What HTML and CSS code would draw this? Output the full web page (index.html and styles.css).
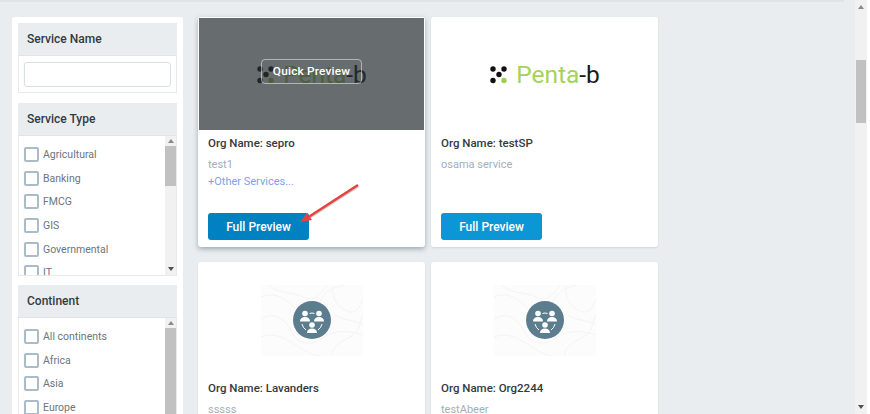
FILE: index.html
```html
<!DOCTYPE html>
<html lang="en">
<head>
    <meta charset="UTF-8">
    <title>Service Catalog</title>
    <link rel="stylesheet" href="styles.css">
</head>
<body>
    <svg class="defs">
        <symbol id="org-icon" viewBox="0 0 102 71">
            <rect width="102" height="71" fill="#fcfcfc"/>
            <g fill="none" stroke="#f3f3f3" stroke-width="1">
                <path d="M0 12C14 6 26 14 36 26S52 30 58 18 72 2 84 0"/>
                <path d="M8 0C18 10 30 6 42 12S60 8 66 0"/>
                <path d="M0 34C14 26 24 34 30 46S48 62 60 54 82 44 102 50"/>
                <path d="M0 52C16 46 28 56 38 62S52 71 60 71"/>
                <path d="M70 71C72 58 84 56 92 50S98 36 102 30"/>
                <path d="M72 0C70 12 76 22 86 26S98 22 102 14"/>
                <path d="M74 30C82 36 92 34 102 40"/>
            </g>
            <circle cx="51" cy="35" r="19" fill="#5b7d8e"/>
            <g fill="#fff">
                <circle cx="44" cy="28.5" r="2.8"/>
                <path d="M39 36.5c0-3 2-4.5 5-4.5s5 1.5 5 4.5z"/>
                <circle cx="58" cy="28.5" r="2.8"/>
                <path d="M53 36.500c0-3 2-4.500 5-4.500s5 1.500 5 4.500z"/>
                <circle cx="51" cy="40" r="2.800"/>
                <path d="M46 48c0-3 2-4.500 5-4.500s5 1.500 5 4.500z"/>
            </g>
            <g fill="none" stroke="#fff" stroke-width="1">
                <path d="M48.500 28.500q2.500-1 5 0"/>
                <path d="M41 39q1 4 4 6"/>
                <path d="M61 39q-1 4-4 6"/>
            </g>
        </symbol>
        <symbol id="penta-dots" viewBox="0 0 17 18">
            <circle cx="3" cy="3" r="2.700" fill="#111"/>
            <circle cx="14" cy="3" r="2.700" fill="#111"/>
            <circle cx="9" cy="8.500" r="2.700" fill="#111"/>
            <circle cx="3" cy="14.500" r="2.700" fill="#111"/>
            <circle cx="14" cy="14.500" r="2.700" fill="#9ccf4f"/>
        </symbol>
    </svg>

    <div class="page">
        <div class="content">
            <div class="top-line"></div>
            <div class="layout">
                <!-- Filters -->
                <aside class="filters">
                    <section>
                        <h3 class="filter-title">Service Name</h3>
                        <div class="filter-box name-box">
                            <input type="text" class="name-input">
                        </div>
                    </section>

                    <section>
                        <h3 class="filter-title">Service Type</h3>
                        <div class="filter-box list-box">
                            <ul class="check-list">
                                <li><span class="check"></span>Agricultural</li>
                                <li><span class="check"></span>Banking</li>
                                <li><span class="check"></span>FMCG</li>
                                <li><span class="check"></span>GIS</li>
                                <li><span class="check"></span>Governmental</li>
                                <li><span class="check"></span>IT</li>
                            </ul>
                            <div class="mini-scroll">
                                <span class="arrow-up"></span>
                                <div class="mini-track">
                                    <div class="mini-thumb type-thumb"></div>
                                </div>
                                <span class="arrow-down"></span>
                            </div>
                        </div>
                    </section>

                    <section>
                        <h3 class="filter-title">Continent</h3>
                        <div class="filter-box list-box">
                            <ul class="check-list">
                                <li><span class="check"></span>All continents</li>
                                <li><span class="check"></span>Africa</li>
                                <li><span class="check"></span>Asia</li>
                                <li><span class="check"></span>Europe</li>
                            </ul>
                            <div class="mini-scroll">
                                <span class="arrow-up"></span>
                                <div class="mini-track">
                                    <div class="mini-thumb continent-thumb"></div>
                                </div>
                                <span class="arrow-down"></span>
                            </div>
                        </div>
                    </section>
                </aside>

                <!-- Organisation cards -->
                <main class="cards">
                    <article class="card card-hover">
                        <div class="card-image">
                            <div class="penta-logo">
                                <svg class="penta-dots"><use href="#penta-dots"/></svg>
                                <span class="penta-name">Penta<span class="penta-b">-b</span></span>
                            </div>
                            <div class="image-overlay">
                                <span class="quick-btn">Quick Preview</span>
                            </div>
                        </div>
                        <div class="card-body">
                            <h4 class="org-name">Org Name: sepro</h4>
                            <p class="org-service">test1</p>
                            <a class="org-more">+Other Services...</a>
                            <button class="full-btn">Full Preview</button>
                        </div>
                    </article>

                    <article class="card">
                        <div class="card-image">
                            <div class="penta-logo">
                                <svg class="penta-dots"><use href="#penta-dots"/></svg>
                                <span class="penta-name">Penta<span class="penta-b">-b</span></span>
                            </div>
                        </div>
                        <div class="card-body">
                            <h4 class="org-name">Org Name: testSP</h4>
                            <p class="org-service">osama service</p>
                            <a class="org-more"></a>
                            <button class="full-btn">Full Preview</button>
                        </div>
                    </article>

                    <article class="card">
                        <div class="card-image">
                            <svg class="org-icon"><use href="#org-icon"/></svg>
                        </div>
                        <div class="card-body">
                            <h4 class="org-name">Org Name: Lavanders</h4>
                            <p class="org-service">sssss</p>
                        </div>
                    </article>

                    <article class="card">
                        <div class="card-image">
                            <svg class="org-icon"><use href="#org-icon"/></svg>
                        </div>
                        <div class="card-body">
                            <h4 class="org-name">Org Name: Org2244</h4>
                            <p class="org-service">testAbeer</p>
                        </div>
                    </article>

                    <!-- Arrow drawn on the screenshot -->
                    <svg class="note-arrow" viewBox="0 0 70 50">
                        <path class="note-shadow" d="M66 3L15 36"/>
                        <path class="note-line" d="M66 2L15 35"/>
                        <path class="note-head" d="M8 39L15 30L20 37z"/>
                    </svg>
                </main>
            </div>
        </div>

        <!-- Page scrollbar -->
        <div class="page-scroll">
            <span class="arrow-up"></span>
            <div class="page-track">
                <div class="page-thumb"></div>
            </div>
            <span class="arrow-down"></span>
        </div>
    </div>
</body>
</html>
```

FILE: styles.css
```css
* {
    box-sizing: border-box;
}
html, body {
    margin: 0;
    height: 100%;
    overflow: hidden;
}
body {
    font-family: Roboto, "Liberation Sans", sans-serif;
    background: #fff;
}
.defs {
    width: 0;
    height: 0;
    display: block;
}
.page {
    display: flex;
    width: 867px;
    height: 414px;
    overflow: hidden;
    background: #e9edf0;
}
.content {
    flex: 1;
    min-width: 0;
}
.top-line {
    width: 844px;
    height: 2px;
    background: #dde3e9;
}
.layout {
    display: flex;
    align-items: flex-start;
    gap: 15px;
    padding: 15px 0 0 12px;
}

/* filters */
.filters {
    width: 171px;
    flex: none;
    padding: 6px;
    background: #fff;
    border-radius: 3px;
}
.filter-title {
    height: 32px;
    margin: 0;
    padding-left: 9px;
    font-size: 12px;
    font-weight: 500;
    line-height: 32px;
    color: #343a40;
    background: #e9edf0;
}
.filter-box {
    border: 1px solid #e6eaed;
    border-top-color: #dfe4e8;
}
.name-box {
    height: 38px;
    padding: 6px 5px;
    margin-bottom: 10px;
}
.name-input {
    display: block;
    width: 147px;
    height: 25px;
    border: 1px solid #d9e0e4;
    border-radius: 3px;
    background: #fff;
}
.list-box {
    display: flex;
    height: 141px;
    margin-bottom: 9px;
    overflow: hidden;
}
.check-list {
    flex: 1;
    margin: 0;
    padding: 6px 0 0 5px;
    list-style: none;
    overflow: hidden;
}
.check-list li {
    display: flex;
    align-items: center;
    gap: 4px;
    height: 23.700px;
    padding-top: 1px;
    font-size: 10.500px;
    color: #6c757d;
    white-space: nowrap;
}
.check {
    width: 15px;
    height: 15px;
    flex: none;
    border: 2px solid #a9bcc8;
    border-radius: 2px;
    background: #fff;
}
.mini-scroll {
    display: flex;
    flex-direction: column;
    align-items: center;
    width: 11px;
    flex: none;
    background: #f1f1f1;
}
.mini-scroll .arrow-up {
    margin: 3px 0 3px;
}
.mini-scroll .arrow-down {
    margin: 3px 0 4px;
}
.mini-track {
    flex: 1;
    width: 100%;
}
.mini-thumb {
    width: 100%;
    background: #c1c1c1;
}
.type-thumb {
    height: 40px;
}
.continent-thumb {
    height: 100%;
}
.arrow-up, .arrow-down {
    width: 0;
    height: 0;
    flex: none;
    border-left: 3px solid transparent;
    border-right: 3px solid transparent;
}
.arrow-up {
    border-bottom: 4px solid #8a8a8a;
}
.arrow-down {
    border-top: 4px solid #505050;
}

/* cards */
.cards {
    position: relative;
    display: grid;
    grid-template-columns: 227px 227px;
    column-gap: 6px;
    row-gap: 15px;
    align-content: start;
}
.card {
    height: 230px;
    background: #fff;
    border-radius: 3px;
    box-shadow: 0 1px 2px rgba(90, 110, 125, 0.18);
}
.card-hover {
    box-shadow: 0 2px 5px rgba(80, 100, 115, 0.5);
}
.card-image {
    position: relative;
    display: flex;
    align-items: center;
    justify-content: center;
    height: 113px;
    overflow: hidden;
    border-radius: 3px 3px 0 0;
}
.image-overlay {
    position: absolute;
    inset: 1px 1px 0 1px;
    display: flex;
    align-items: center;
    justify-content: center;
    background: rgba(38, 46, 49, 0.7);
}
.quick-btn {
    width: 101px;
    height: 25px;
    margin-top: -6px;
    border: 1px solid rgba(255, 255, 255, 0.5);
    border-radius: 4px;
    font-size: 11.800px;
    font-weight: 500;
    line-height: 22px;
    letter-spacing: 0.2px;
    text-align: center;
    color: #fff;
}
.penta-logo {
    display: flex;
    align-items: center;
    gap: 9px;
    margin: 2px 0 0 1px;
}
.penta-dots {
    width: 17px;
    height: 18px;
}
.penta-name {
    font-size: 24.500px;
    font-weight: 400;
    line-height: 26px;
    color: #a5d25a;
}
.penta-b {
    color: #1b1b1b;
}
.org-icon {
    width: 102px;
    height: 71px;
    margin-top: 3px;
}
.card-body {
    display: flex;
    flex-direction: column;
    align-items: flex-start;
    padding: 5px 10px 0;
}
.org-name {
    margin: 0;
    font-size: 11.500px;
    font-weight: 500;
    line-height: 16px;
    color: #343a40;
}
.org-service {
    margin: 6px 0 0;
    font-size: 11px;
    line-height: 16px;
    color: #a3afb6;
}
.org-more {
    height: 16px;
    margin-top: 1px;
    font-size: 11px;
    line-height: 16px;
    color: #78a4f0;
}
.full-btn {
    width: 101px;
    height: 27px;
    margin-top: 23px;
    padding: 0;
    border: none;
    border-radius: 3px;
    font-family: inherit;
    font-size: 12px;
    font-weight: 500;
    color: #fff;
    background: #0d96d6;
}
.card-hover .full-btn {
    background: #0082c2;
}
.note-arrow {
    position: absolute;
    left: 94px;
    top: 166px;
    width: 70px;
    height: 50px;
    overflow: visible;
}
.note-line, .note-shadow {
    fill: none;
    stroke-width: 2.500px;
}
.note-line {
    stroke: #e8423f;
}
.note-shadow {
    stroke: rgba(0, 0, 0, 0.2);
    stroke-width: 3px;
}
.note-head {
    fill: #e8423f;
}

/* page scrollbar */
.page-scroll {
    display: flex;
    flex-direction: column;
    align-items: center;
    width: 12px;
    flex: none;
    background: #f1f1f1;
}
.page-scroll .arrow-up {
    margin: 5px 0 0;
}
.page-scroll .arrow-down {
    margin: 0 0 5px;
}
.page-track {
    flex: 1;
    width: 100%;
    padding: 51px 1px 0;
}
.page-thumb {
    width: 100%;
    height: 63px;
    background: #c1c1c1;
}
```
